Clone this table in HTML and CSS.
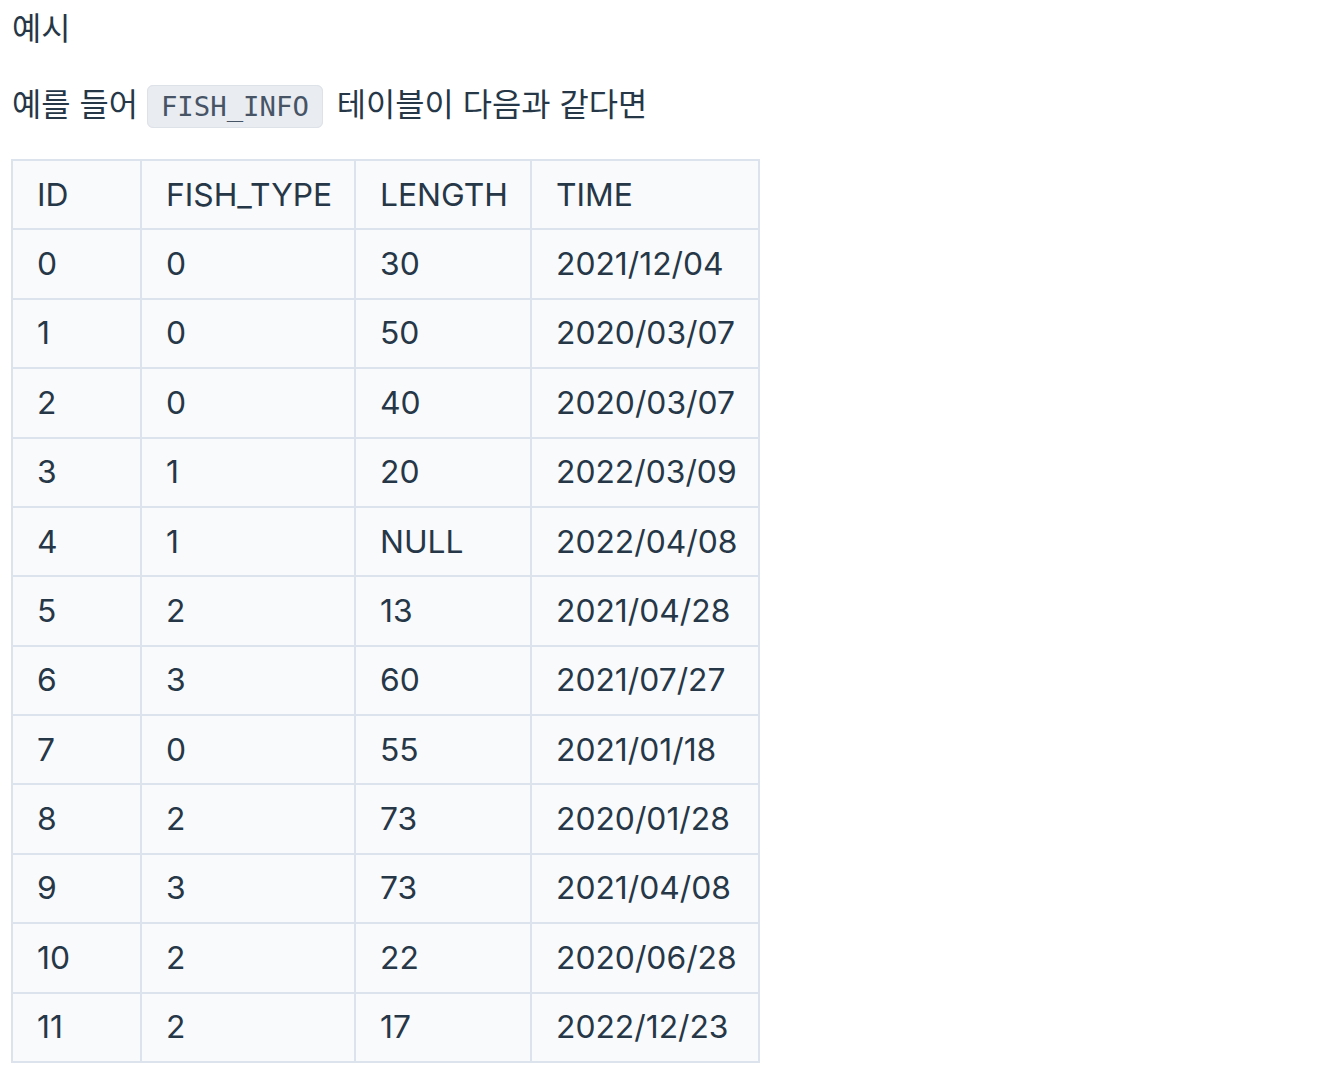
FILE: index.html
```html
<!DOCTYPE html>
<html lang="ko">
<head>
<meta charset="utf-8">
<link rel="stylesheet" href="styles.css">
</head>
<body>
<div class="doc">
<h5 class="title">예시</h5>
<p class="desc">예를 들어 <code class="code">FISH_INFO</code> 테이블이 다음과 같다면</p>
<table class="tbl">
<colgroup>
<col class="c1"><col class="c2"><col class="c3"><col class="c4">
</colgroup>
<thead>
<tr><th>ID</th><th>FISH_TYPE</th><th>LENGTH</th><th>TIME</th></tr>
</thead>
<tbody>
<tr><td>0</td><td>0</td><td>30</td><td>2021/12/04</td></tr>
<tr><td>1</td><td>0</td><td>50</td><td>2020/03/07</td></tr>
<tr><td>2</td><td>0</td><td>40</td><td>2020/03/07</td></tr>
<tr><td>3</td><td>1</td><td>20</td><td>2022/03/09</td></tr>
<tr><td>4</td><td>1</td><td>NULL</td><td>2022/04/08</td></tr>
<tr><td>5</td><td>2</td><td>13</td><td>2021/04/28</td></tr>
<tr><td>6</td><td>3</td><td>60</td><td>2021/07/27</td></tr>
<tr><td>7</td><td>0</td><td>55</td><td>2021/01/18</td></tr>
<tr><td>8</td><td>2</td><td>73</td><td>2020/01/28</td></tr>
<tr><td>9</td><td>3</td><td>73</td><td>2021/04/08</td></tr>
<tr><td>10</td><td>2</td><td>22</td><td>2020/06/28</td></tr>
<tr><td>11</td><td>2</td><td>17</td><td>2022/12/23</td></tr>
</tbody>
</table>
</div>
</body>
</html>
```
FILE: styles.css
```css
html, body {
  margin: 0;
  padding: 0;
  background: #ffffff;
}
.doc {
  padding: 0 0 0 11px;
  font-family: Inter, "Noto Sans CJK KR", sans-serif;
  font-size: 31.8px;
  line-height: 50px;
  color: #263747;
}
.title {
  margin: 4px 0 0 1px;
  font-size: 31.8px;
  font-weight: 400;
  line-height: 50px;
}
.desc {
  margin: 26px 0 0 1px;
}
.code {
  font-family: "DejaVu Sans Mono", monospace;
  font-size: 27.3px;
  line-height: normal;
  color: #465466;
  background: #e9ecf1;
  border: 1px solid #dde2e9;
  border-radius: 6px;
  padding: 5px 13px;
  margin: 0 5px 0 0;
}
.tbl {
  margin-top: 29px;
  border-collapse: collapse;
  table-layout: fixed;
  width: 747px;
  background: #f9fafc;
}
.c1 { width: 129px; }
.c2 { width: 214px; }
.c3 { width: 176px; }
.c4 { width: 228px; }
.tbl th, .tbl td {
  border: 2px solid #dde3ec;
  padding: 10.7px 24px;
  line-height: 46px;
  text-align: left;
  font-weight: 400;
}
```
